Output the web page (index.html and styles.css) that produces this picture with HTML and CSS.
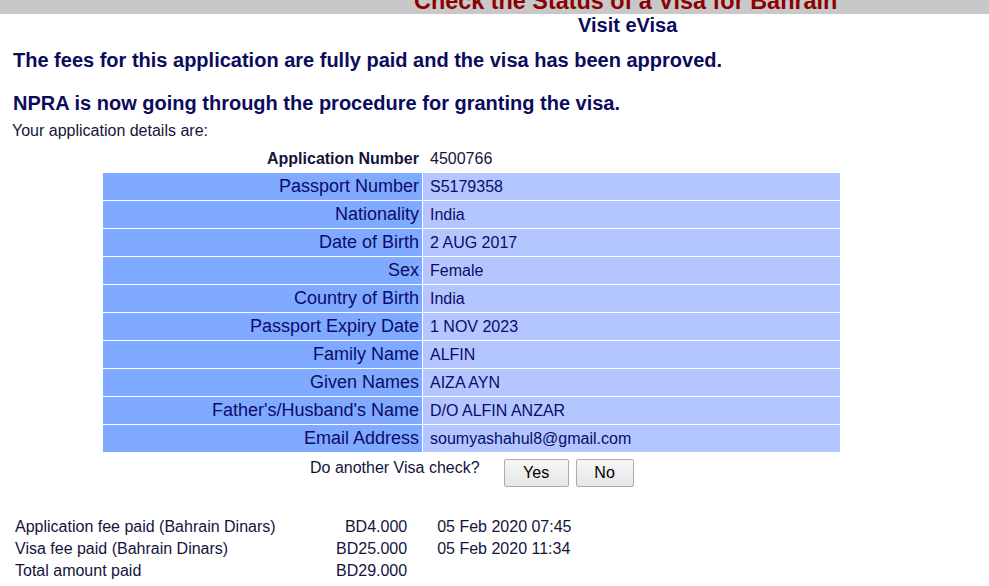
FILE: index.html
```html
<!DOCTYPE html>
<html>
<head>
<meta charset="utf-8">
<link rel="stylesheet" href="styles.css">
</head>
<body>
<div class="topbar"><div class="title">Check the Status of a Visa for Bahrain</div></div>
<div class="subtitle">Visit eVisa</div>
<h2 class="msg msg1">The fees for this application are fully paid and the visa has been approved.</h2>
<h2 class="msg msg2">NPRA is now going through the procedure for granting the visa.</h2>
<div class="intro">Your application details are:</div>
<table class="details">
  <tr class="plain"><td class="lbl bold">Application Number</td><td class="val">4500766</td></tr>
  <tr><td class="lbl">Passport Number</td><td class="val">S5179358</td></tr>
  <tr><td class="lbl">Nationality</td><td class="val">India</td></tr>
  <tr><td class="lbl">Date of Birth</td><td class="val">2 AUG 2017</td></tr>
  <tr><td class="lbl">Sex</td><td class="val">Female</td></tr>
  <tr><td class="lbl">Country of Birth</td><td class="val">India</td></tr>
  <tr><td class="lbl">Passport Expiry Date</td><td class="val">1 NOV 2023</td></tr>
  <tr><td class="lbl">Family Name</td><td class="val">ALFIN</td></tr>
  <tr><td class="lbl">Given Names</td><td class="val">AIZA AYN</td></tr>
  <tr><td class="lbl">Father's/Husband's Name</td><td class="val">D/O ALFIN ANZAR</td></tr>
  <tr><td class="lbl">Email Address</td><td class="val">soumyashahul8@gmail.com</td></tr>
</table>
<div class="again">
  <span class="again-text">Do another Visa check?</span>
  <button class="btn btn-yes">Yes</button>
  <button class="btn btn-no">No</button>
</div>
<table class="fees">
  <tr><td class="f-lbl">Application fee paid (Bahrain Dinars)</td><td class="f-amt">BD4.000</td><td class="f-date">05 Feb 2020 07:45</td></tr>
  <tr><td class="f-lbl">Visa fee paid (Bahrain Dinars)</td><td class="f-amt">BD25.000</td><td class="f-date">05 Feb 2020 11:34</td></tr>
  <tr><td class="f-lbl">Total amount paid</td><td class="f-amt">BD29.000</td><td class="f-date"></td></tr>
</table>
</body>
</html>
```
FILE: styles.css
```css
html, body {
  margin: 0;
  padding: 0;
  background: #ffffff;
  font-family: "Liberation Sans", Arial, sans-serif;
  color: #000033;
  overflow: hidden;
}
.topbar {
  height: 14px;
  background: #c8c8c8;
  overflow: hidden;
}
.title {
  margin-top: -11px;
  padding-left: 414px;
  font-size: 23.4px;
  line-height: 24px;
  font-weight: bold;
  color: #8b0000;
  white-space: nowrap;
}
.subtitle {
  padding-left: 578px;
  margin-top: 1px;
  font-size: 20px;
  line-height: 20px;
  font-weight: bold;
  color: #0b0b5e;
}
.msg {
  margin: 0;
  padding-left: 13px;
  font-size: 20px;
  font-weight: bold;
  color: #0b0b5e;
  line-height: 24px;
}
.msg1 { margin-top: 13px; }
.msg2 { margin-top: 19px; }
.intro {
  padding-left: 12px;
  font-size: 16px;
  line-height: 18px;
  margin-top: 7px;
  color: #14143c;
}
.details {
  margin-left: 102px;
  margin-top: 4px;
  border-collapse: separate;
  border-spacing: 1px;
  width: 739px;
  font-size: 16px;
  color: #0b0b6a;
}
.details td {
  height: 27px;
  padding: 0;
}
.details .lbl {
  width: 316px;
  text-align: right;
  padding-right: 3px;
  font-size: 18px;
  background: #80aaff;
}
.details .val {
  padding-left: 7px;
  background: #b3c6ff;
}
.details .plain .lbl,
.details .plain .val {
  background: transparent;
  color: #14143c;
}
.details .bold {
  font-weight: bold;
  font-size: 16px;
}
.again {
  display: flex;
  align-items: flex-start;
  padding-left: 310px;
  margin-top: 6px;
  font-size: 16px;
  color: #14143c;
}
.again-text {
  margin-right: 24px;
}
.btn {
  font-family: "Liberation Sans", Arial, sans-serif;
  font-size: 16px;
  color: #000;
  background: linear-gradient(#f6f6f6, #e6e6e6);
  border: 1px solid #adadad;
  border-radius: 2px;
  height: 28px;
  padding: 0;
  margin-top: 0;
}
.btn-yes { width: 65px; margin-right: 7px; }
.btn-no { width: 58px; }
.fees {
  margin-left: 13px;
  margin-top: 29px;
  border-collapse: collapse;
  font-size: 16px;
  color: #14143c;
}
.fees td {
  padding: 0 2px;
  height: 22px;
}
.f-lbl { width: 317px; }
.f-amt { width: 69px; text-align: right; }
.f-date { padding-left: 28px !important; }
```
